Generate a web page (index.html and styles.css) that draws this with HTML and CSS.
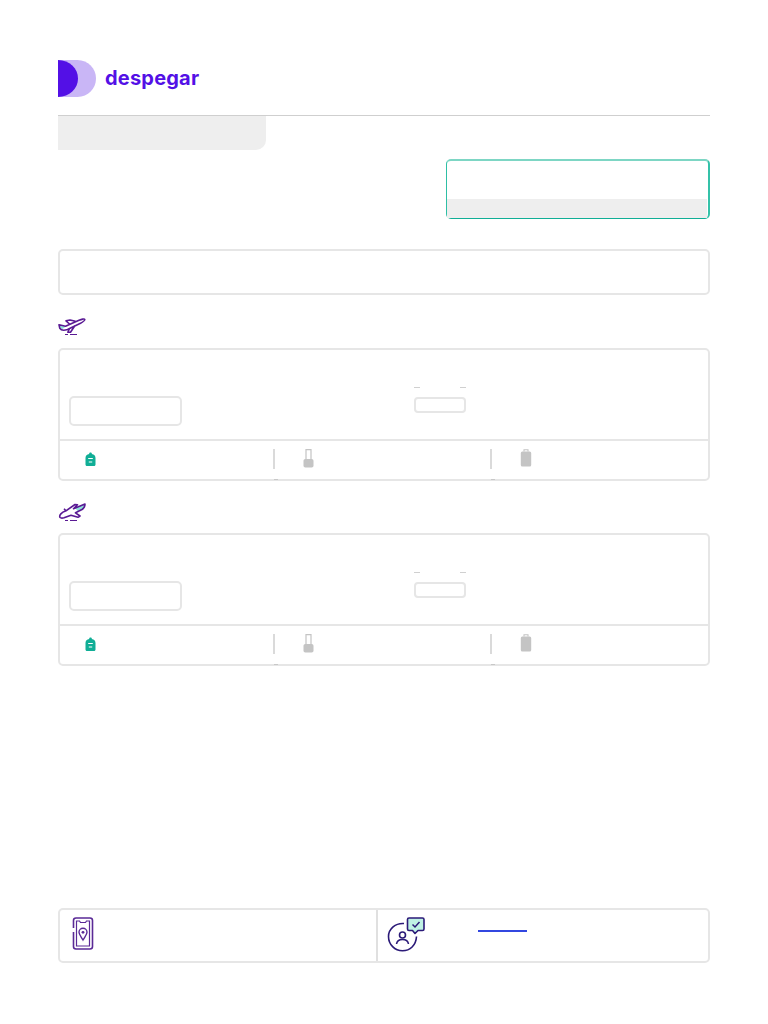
FILE: index.html
```html
<!DOCTYPE html>
<html lang="es">

<head>
    <meta charset="UTF-8">
    <title>despegar</title>
    <link rel="stylesheet" href="styles.css">
</head>

<body>
    <div class="page">
        <div class="header">
            <svg class="logo-mark" width="38" height="37" viewBox="0 0 38 37">
                <path d="M0 0H19.500C30 0 38 8.300 38 18.500S30 37 19.500 37H0Z" fill="#c9b6f6" />
                <path d="M0 0C11.500 0 20 8.300 20 18.500S11.500 37 0 37Z" fill="#5310e6" />
            </svg>
            <span class="logo-text">despegar</span>
        </div>
        <div class="tab"></div>

        <div class="summary-row">
            <div class="summary">
                <div class="summary-strip"></div>
            </div>
        </div>

        <div class="notice"></div>

        <div class="flight-icon">
            <svg width="28" height="20" viewBox="0 0 28 20">
                <path d="M1.500 8.500L8 9.500L4.500 12C3 12 1.800 10.500 1.500 8.500Z" fill="#8fe3da" />
                <path d="M1 7.800L7.500 9.200L21 3.200C23.500 2.200 26.500 1.500 26.800 2.500C27 3.700 24.500 5.200 22.500 6.300L9.500 12.500C6.500 13.500 3 13.200 1.800 11.300ZM11.500 7L8 3.800L12 3L17.500 4.300M17 8.500L12.500 15.300H9.800L11.500 11.500" fill="none" stroke="#5a1a94" stroke-width="1.600" stroke-linejoin="round" />
                <path d="M7 17.500H10M12 17.500H19" stroke="#5a1a94" stroke-width="1.200" />
            </svg>
        </div>
        <div class="flight-card">
            <div class="flight-main">
                <div class="flight-input"></div>
                <div class="fare">
                    <div class="fare-dashes"><span></span><span></span></div>
                    <div class="fare-box"></div>
                </div>
            </div>
            <div class="bags">
                <div class="bag bag-first">
                    <svg width="11" height="14" viewBox="0 0 11 14">
                        <path d="M4.200 2V1.200C4.200 .3 6.800 .3 6.800 1.200V2C9.200 2.300 10.500 3.800 10.500 6V12.500C10.500 13.400 10 14 9 14H2C1 14 .5 13.400 .5 12.500V6C.5 3.800 1.800 2.300 4.200 2Z" fill="#10ae96" />
                        <path d="M3.200 6.500H7.800M3.800 10H7.200" stroke="#fff" stroke-width="1.200" />
                    </svg>
                </div>
                <div class="bag bag-middle">
                    <svg width="11" height="19" viewBox="0 0 11 19">
                        <path d="M3 10V.7H8V10" fill="none" stroke="#c4c4c4" stroke-width="1.200" />
                        <rect x=".5" y="10" width="10" height="8.500" rx="1.800" fill="#c4c4c4" />
                    </svg>
                </div>
                <div class="bag bag-last">
                    <svg width="12" height="18" viewBox="0 0 12 18">
                        <path d="M4 2.500V.7H8V2.500" fill="none" stroke="#c4c4c4" stroke-width="1.100" />
                        <rect x=".8" y="2.500" width="10.400" height="15" rx="1.500" fill="#c4c4c4" />
                    </svg>
                </div>
            </div>
        </div>

        <div class="flight-icon flight-icon-back">
            <svg width="28" height="20" viewBox="0 0 28 20">
                <path d="M17 6L27 2C27 4.500 25.500 6.500 24 7.500L20 9.300Z" fill="#8fe3da" />
                <path d="M2 15.500C.8 13 3.500 10.500 8 8.800L17 2.500L19.500 2.800L15.500 6.800L27 2C27 4.500 25.500 6.500 24 7.500L17.500 10.800L22 14L20 15.300L13 13.200L6 15.800C4.500 16.200 2.800 16.200 2 15.500ZM8 8.800L6 6.800" fill="none" stroke="#5a1a94" stroke-width="1.600" stroke-linejoin="round" />
                <path d="M7 18.500H10M12 18.500H19" stroke="#5a1a94" stroke-width="1.200" />
            </svg>
        </div>
        <div class="flight-card">
            <div class="flight-main">
                <div class="flight-input"></div>
                <div class="fare">
                    <div class="fare-dashes"><span></span><span></span></div>
                    <div class="fare-box"></div>
                </div>
            </div>
            <div class="bags">
                <div class="bag bag-first">
                    <svg width="11" height="14" viewBox="0 0 11 14">
                        <path d="M4.200 2V1.200C4.200 .3 6.800 .3 6.800 1.200V2C9.200 2.300 10.500 3.800 10.500 6V12.500C10.500 13.400 10 14 9 14H2C1 14 .5 13.400 .5 12.500V6C.5 3.800 1.800 2.300 4.200 2Z" fill="#10ae96" />
                        <path d="M3.200 6.500H7.800M3.800 10H7.200" stroke="#fff" stroke-width="1.200" />
                    </svg>
                </div>
                <div class="bag bag-middle">
                    <svg width="11" height="19" viewBox="0 0 11 19">
                        <path d="M3 10V.7H8V10" fill="none" stroke="#c4c4c4" stroke-width="1.200" />
                        <rect x=".5" y="10" width="10" height="8.500" rx="1.800" fill="#c4c4c4" />
                    </svg>
                </div>
                <div class="bag bag-last">
                    <svg width="12" height="18" viewBox="0 0 12 18">
                        <path d="M4 2.500V.7H8V2.500" fill="none" stroke="#c4c4c4" stroke-width="1.100" />
                        <rect x=".8" y="2.500" width="10.400" height="15" rx="1.500" fill="#c4c4c4" />
                    </svg>
                </div>
            </div>
        </div>

        <div class="help">
            <div class="help-left">
                <svg width="22" height="33" viewBox="0 0 22 33">
                    <path d="M1.500 11V3.500C1.500 2 2.500 1 4 1H18C19.500 1 20.500 2 20.500 3.500V29.500C20.500 31 19.500 32 18 32H4C2.500 32 1.500 31 1.500 29.500V15" fill="none" stroke="#5a2a96" stroke-width="1.600" />
                    <path d="M4.500 4H7.500L8.500 5.500H13.500L14.500 4H17.500V29H4.500Z" fill="none" stroke="#5a2a96" stroke-width="1.200" />
                    <path d="M11 23C9 19.500 7 17.500 7 15.300C7 13 8.800 11.300 11 11.300S15 13 15 15.300C15 17.500 13 19.500 11 23Z" fill="none" stroke="#5a2a96" stroke-width="1.400" />
                    <circle cx="11" cy="15.300" r="1.400" fill="#5a2a96" />
                </svg>
            </div>
            <div class="help-right">
                <svg width="38" height="35" viewBox="0 0 38 35">
                    <path d="M17 6.500C8.500 5.800 1.500 12 1.500 19.500C1.500 27.500 7.800 33.800 15.500 33.800C23 33.800 29 28.500 29.500 19.500" fill="none" stroke="#2b1a78" stroke-width="1.600" />
                    <circle cx="15.500" cy="18" r="3" fill="none" stroke="#2b1a78" stroke-width="1.600" />
                    <path d="M9.500 27C10 23.500 12.500 22.500 15.500 22.500S21 23.500 21.500 27" fill="none" stroke="#2b1a78" stroke-width="1.600" />
                    <path d="M22 1H35.500C36.500 1 37 1.500 37 2.500V12C37 13 36.500 13.500 35.500 13.500H31L28 16.500L25.500 13.500H22C21 13.500 20.500 13 20.500 12V2.500C20.500 1.500 21 1 22 1Z" fill="#bff2e4" stroke="#2b1a78" stroke-width="1.600" stroke-linejoin="round" />
                    <path d="M25.500 7.500L28 10L32.500 5" fill="none" stroke="#2b1a78" stroke-width="1.500" />
                </svg>
                <a class="help-link" href="#"></a>
            </div>
        </div>
    </div>
</body>

</html>
```

FILE: styles.css
```css
body {
    background: #FFFFFF;
    margin: 0;
}

.page {
    padding: 60px 58px 0;
}

.header {
    display: flex;
    align-items: center;
    gap: 9px;
    padding-bottom: 18px;
    border-bottom: 1px solid #CFCFCF;
}

.logo-mark {
    display: block;
}

.logo-text {
    font-family: "Inter", sans-serif;
    font-size: 20px;
    font-weight: 700;
    letter-spacing: .2px;
    line-height: 37px;
    color: #5310E6;
}

.tab {
    width: 208px;
    height: 34px;
    background: #EEEEEE;
    border-bottom-right-radius: 10px;
}

.summary-row {
    display: flex;
    justify-content: flex-end;
    margin-top: 9px;
}

.summary {
    box-sizing: border-box;
    width: 264px;
    height: 60px;
    padding: 38px 1px 0 0;
    border-style: solid;
    border-width: 2px 2px 1px 1px;
    border-color: #7DD6C4 #35C2A9 #10AE96 #2EBFA5;
    border-radius: 5px;
}

.summary-strip {
    height: 19px;
    background: #EEEEEE;
}

.notice {
    box-sizing: border-box;
    height: 46px;
    margin-top: 30px;
    border: 2px solid #E6E6E6;
    border-radius: 5px;
}

.flight-icon {
    height: 20px;
    margin-top: 22px;
    margin-bottom: 11px;
}

.flight-icon-back {
    margin-top: 21px;
}

.flight-icon svg {
    display: block;
}

.flight-card {
    box-sizing: border-box;
    height: 133px;
    border: 2px solid #E6E6E6;
    border-radius: 5px;
}

.flight-main {
    display: flex;
    box-sizing: border-box;
    height: 91px;
    padding-left: 9px;
    border-bottom: 2px solid #E6E6E6;
}

.flight-input {
    box-sizing: border-box;
    width: 113px;
    height: 30px;
    margin-top: 46px;
    border: 2px solid #E6E6E6;
    border-radius: 5px;
}

.fare {
    width: 52px;
    margin-left: 232px;
    margin-top: 37px;
}

.fare-dashes {
    display: flex;
    justify-content: space-between;
    height: 10px;
}

.fare-dashes span {
    width: 6px;
    height: 1px;
    background: #D0D0D0;
}

.fare-box {
    box-sizing: border-box;
    height: 16px;
    border: 2px solid #E6E6E6;
    border-radius: 4px;
}

.bags {
    display: flex;
    padding-top: 8px;
}

.bag {
    position: relative;
    box-sizing: border-box;
    height: 20px;
}

.bag svg {
    display: block;
}

.bag-first {
    display: flex;
    align-items: center;
    width: 213px;
    padding-left: 25px;
}

.bag-middle,
.bag-last {
    border-left: 2px solid #DADADA;
    padding-left: 28px;
}

.bag-middle {
    width: 217px;
}

.bag-last {
    flex: 1;
}

.bag-middle::after,
.bag-last::after {
    content: "";
    position: absolute;
    left: -1px;
    bottom: -11px;
    width: 4px;
    height: 1px;
    background: #C8C8C8;
}

.help {
    display: flex;
    box-sizing: border-box;
    height: 55px;
    margin-top: 242px;
    border: 2px solid #E6E6E6;
    border-radius: 5px;
}

.help-left {
    box-sizing: border-box;
    width: 318px;
    padding: 7px 0 0 12px;
    border-right: 2px solid #E0E0E0;
}

.help-left svg {
    display: block;
}

.help-right {
    display: flex;
    flex: 1;
    padding: 7px 0 0 9px;
}

.help-right svg {
    display: block;
}

.help-link {
    display: block;
    width: 49px;
    height: 2px;
    margin: 13px 0 0 53px;
    background: #3247E0;
}
```
